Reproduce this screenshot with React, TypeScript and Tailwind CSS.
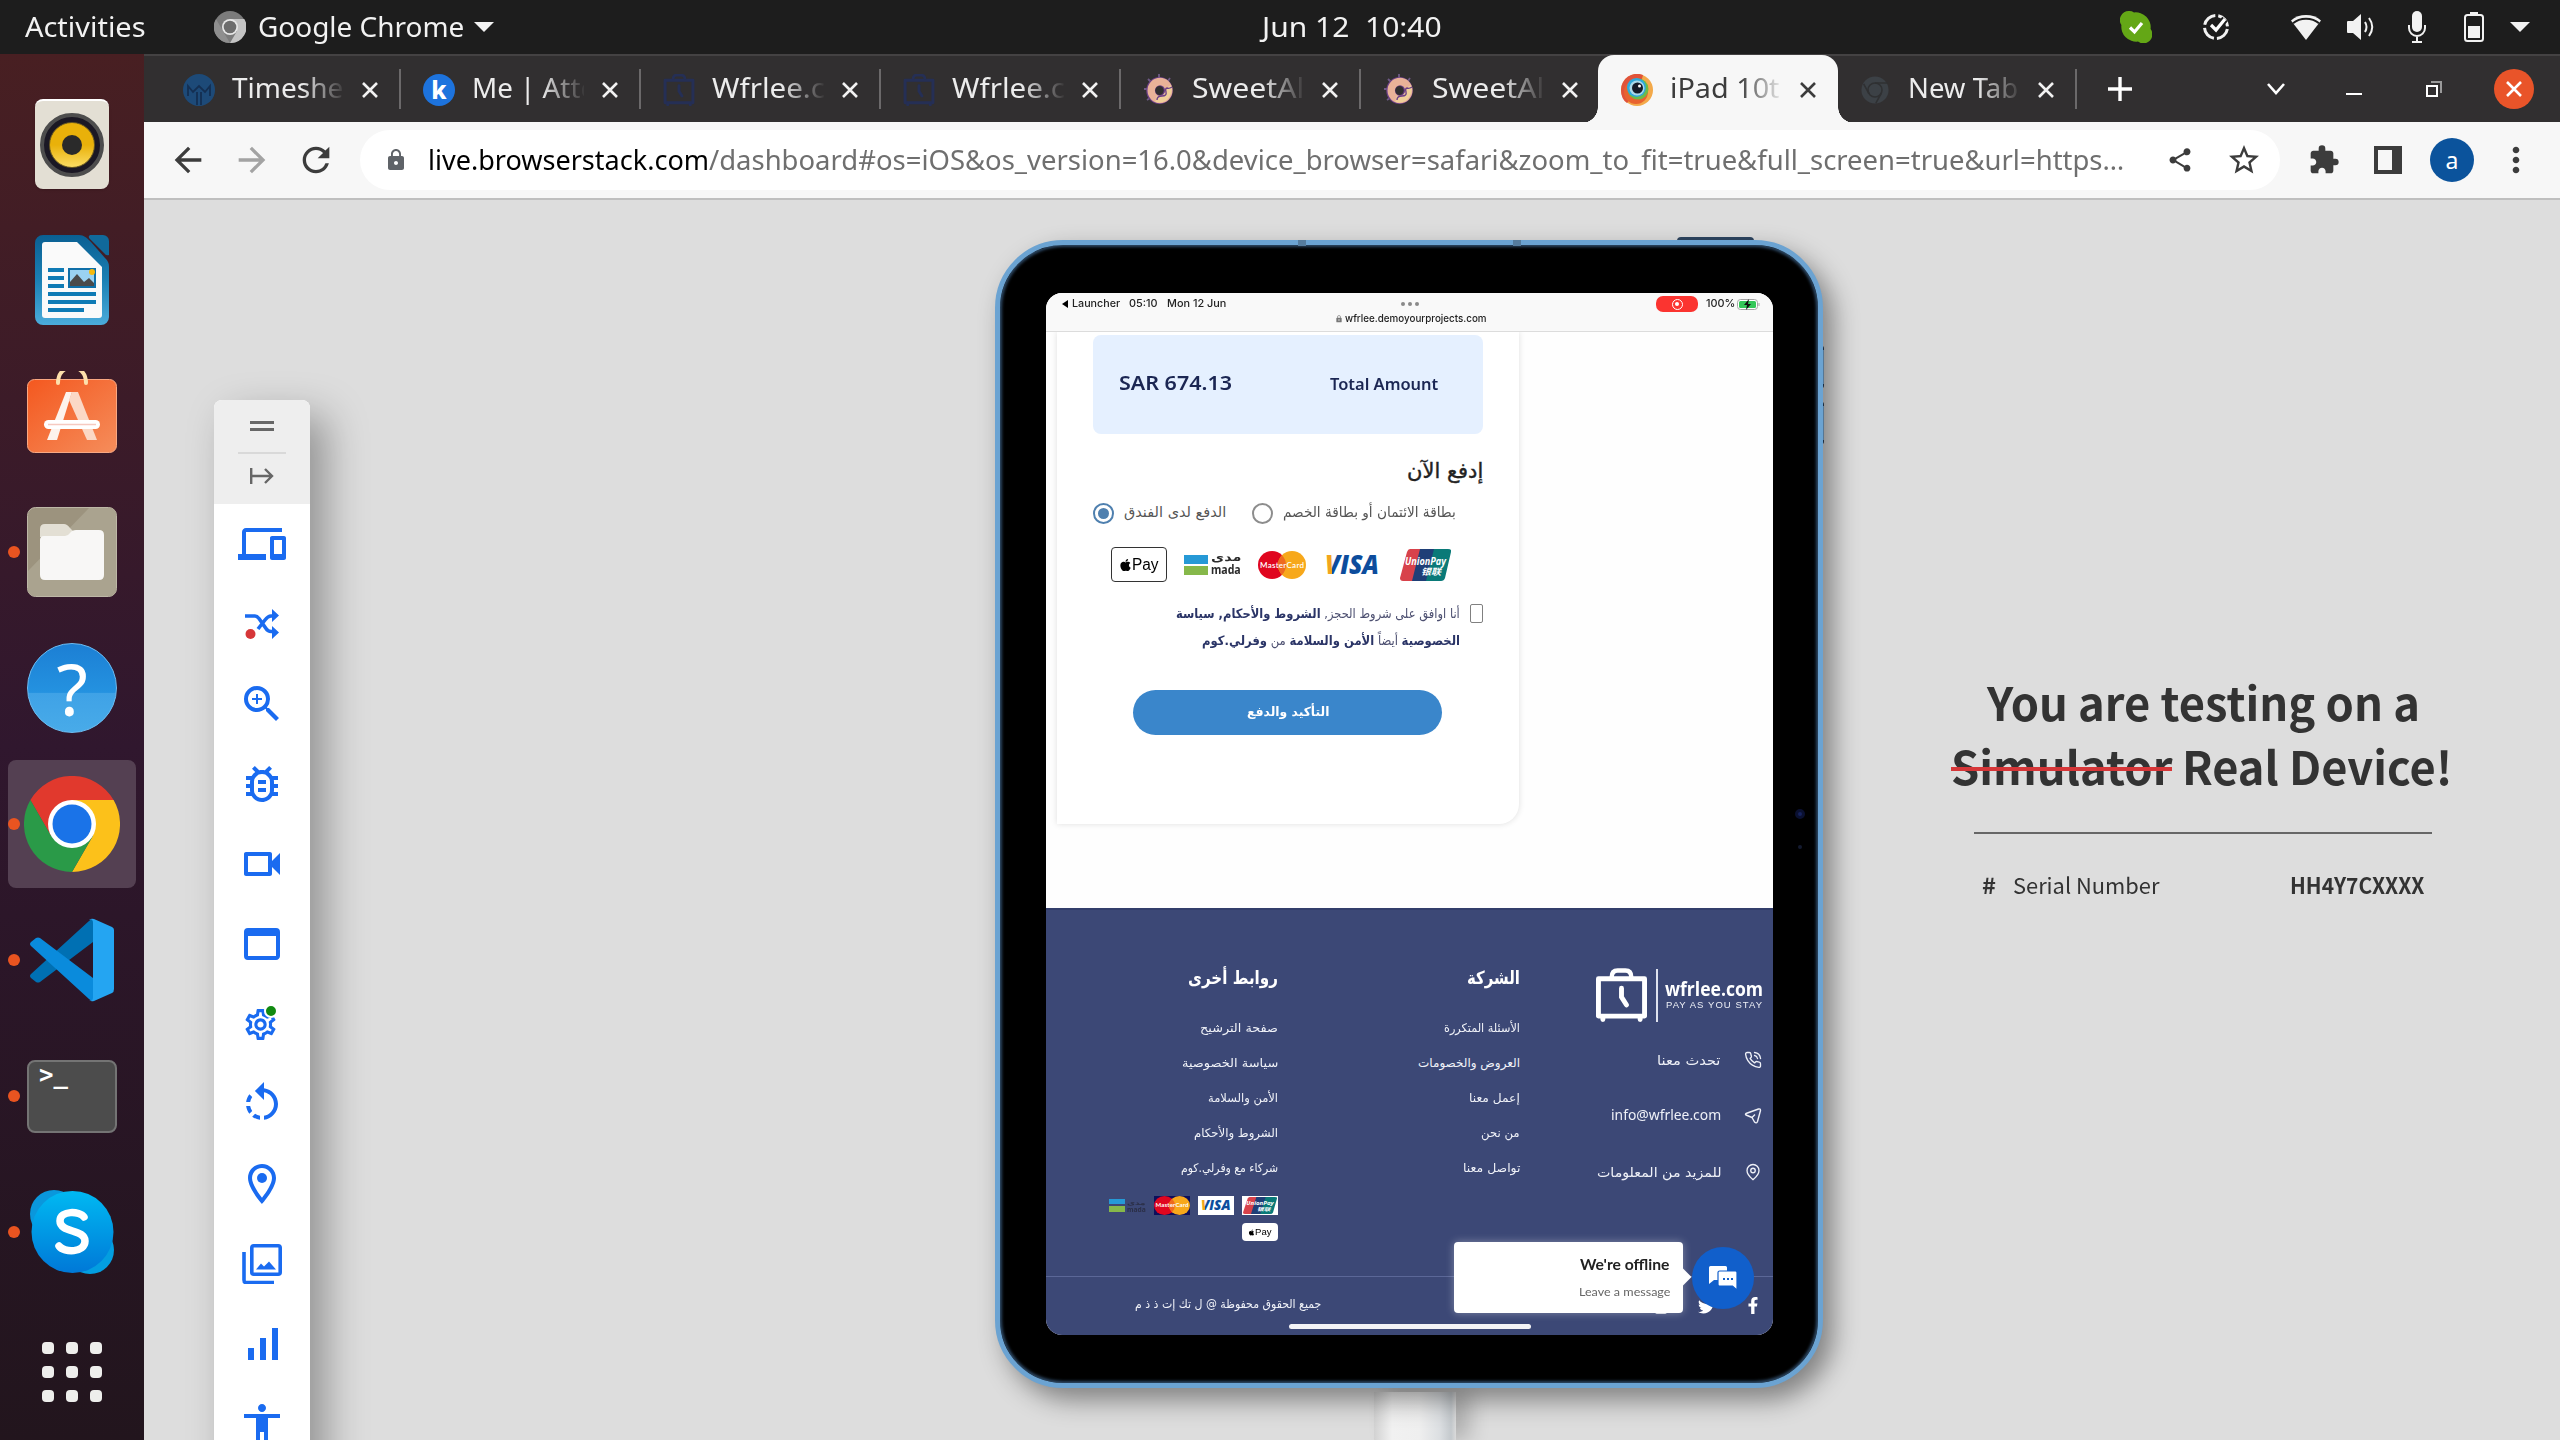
import { useLayoutEffect, useRef, useState } from "react";
import type { ReactNode } from "react";
import {
  MdDevices,
  MdZoomIn,
  MdOutlineBugReport,
  MdOutlineVideocam,
  MdWebAsset,
  MdOutlineSettings,
  MdRotateLeft,
  MdOutlineLocationOn,
  MdSignalCellularAlt,
  MdAccessibility,
  MdArrowBack,
  MdArrowForward,
  MdRefresh,
  MdLock,
  MdShare,
  MdStarOutline,
  MdExtension,
  MdMoreVert,
} from "react-icons/md";
import { FaApple, FaTwitter, FaFacebookF, FaInstagram } from "react-icons/fa";
import { LuPhoneCall, LuMapPin } from "react-icons/lu";

/* One line of text condensed or stretched to a given width. */
function T({ w, className = "", rtl = false, children }: { w: number; className?: string; rtl?: boolean; children: ReactNode }) {
  const ref = useRef<HTMLSpanElement>(null);
  const [k, setK] = useState(1);
  useLayoutEffect(() => {
    if (ref.current && ref.current.offsetWidth) setK(w / ref.current.offsetWidth);
  }, [w]);
  return (
    <span className={"inline-flex shrink-0 " + className} style={{ width: w }}>
      <span ref={ref} dir={rtl ? "rtl" : "ltr"} className="inline-block shrink-0 origin-left whitespace-pre" style={{ transform: `scaleX(${k})` }}>
        {children}
      </span>
    </span>
  );
}

const X = ({ c }: { c: string }) => (
  <svg viewBox="0 0 16 16" className={"h-4 w-4 " + c}>
    <path d="M1 1l14 14M15 1L1 15" stroke="currentColor" strokeWidth="2.6" fill="none" />
  </svg>
);

/* ---------- system bar ---------- */
function TopBar() {
  return (
    <header className="flex h-[54px] items-center bg-[#1d1d1d] pl-[25px] text-[27px] leading-[54px] text-[#f2f2f2]">
      <T w={120}>Activities</T>
      <svg viewBox="0 0 32 32" className="ml-[69px] h-8 w-8">
        <circle cx="16" cy="16" r="16" fill="#7b7b7b" />
        <path d="M16 8h14.3A16 16 0 0 1 16 32l7-12z" fill="#c4c4c4" />
        <path d="M2 8l7 12 7 12A16 16 0 0 1 2 8z" fill="#8f8f8f" />
        <circle cx="16" cy="16" r="8" fill="#e8e8e8" />
        <circle cx="16" cy="16" r="6.3" fill="#6d6d6d" />
      </svg>
      <T w={206} className="ml-[12px]">Google Chrome</T>
      <svg viewBox="0 0 20 10" className="ml-[10px] h-[10px] w-5"><path d="M0 0h20L10 10z" fill="#f2f2f2" /></svg>
      <T w={180} className="ml-[768px]">{"Jun 12  10:40"}</T>
      <svg viewBox="0 0 32 32" className="ml-[678px] h-8 w-8">
        <path d="M9 0a9 9 0 0 1 5 1.4A15 15 0 0 1 30.6 18 9 9 0 0 1 18 30.6 15 15 0 0 1 1.4 14 9 9 0 0 1 9 0z" fill="#64a716" />
        <path d="M10 16.5l4.5 4.5L22 12" stroke="#fff" strokeWidth="3.2" fill="none" />
      </svg>
      <svg viewBox="0 0 28 28" className="ml-[50px] h-7 w-7" fill="none">
        <circle cx="14" cy="14" r="11.5" stroke="#f2f2f2" strokeWidth="3" strokeDasharray="15 3.06" strokeDashoffset="-2" />
        <path d="M9 12l5 5 9-11" stroke="#1d1d1d" strokeWidth="7" />
        <path d="M9 12l5 5 9-11" stroke="#fff" strokeWidth="3.2" />
      </svg>
      <svg viewBox="0 0 30 25" className="ml-[61px] h-[25px] w-[30px]">
        <path d="M0 5.5C8-1.8 22-1.8 30 5.5L15 25z" fill="#f2f2f2" />
        <path d="M2 8.2C9 2.2 21 2.2 28 8.2" stroke="#1d1d1d" strokeWidth="2" fill="none" />
      </svg>
      <svg viewBox="0 0 30 26" className="ml-[26px] h-[26px] w-[30px]">
        <path d="M0 8q0-1 1-1h5l8-7v26l-8-7H1q-1 0-1-1z" fill="#f2f2f2" />
        <path d="M18 8q3 5 0 10M22 4q6.500 9 0 18" stroke="#f2f2f2" strokeWidth="2" fill="none" />
      </svg>
      <svg viewBox="0 0 18 32" className="ml-[31px] h-8 w-[18px]">
        <rect x="4" width="10" height="21" rx="5" fill="#f2f2f2" />
        <path d="M1 14v3a8 8 0 0 0 16 0v-3M9 25v6M4 31h10" stroke="#f2f2f2" strokeWidth="2" fill="none" />
      </svg>
      <svg viewBox="0 0 20 30" className="ml-[38px] h-[30px] w-5">
        <rect x="1" y="3" width="18" height="26" rx="2.5" stroke="#f2f2f2" strokeWidth="2" fill="none" />
        <path d="M6 0h8v3H6zM4 14h12v12H4z" fill="#f2f2f2" />
      </svg>
      <svg viewBox="0 0 20 10" className="ml-[26px] h-[10px] w-5"><path d="M0 0h20L10 10z" fill="#f2f2f2" /></svg>
    </header>
  );
}

/* ---------- dock ---------- */
function DockCell({ run, active, children }: { run?: boolean; active?: boolean; children: ReactNode }) {
  return (
    <div className="flex h-[136px] items-center justify-center">
      <div className={"relative flex h-32 w-32 items-center justify-center rounded-lg " + (active ? "bg-[#544052]" : "")}>
        {run && <span className="absolute left-0 h-3 w-3 rounded-full bg-[#e95420]" />}
        {children}
      </div>
    </div>
  );
}

function Dock() {
  return (
    <aside className="flex w-36 shrink-0 flex-col bg-[linear-gradient(#481f22_0%,#30172e_50%,#2c1629_62%,#22151d_100%)] pt-[22px]">
      <DockCell>
        <div className="flex h-[90px] w-[74px] items-center justify-center rounded-lg border-t-2 border-white bg-[#e3dfd4] shadow">
          <div className="flex h-16 w-16 items-center justify-center rounded-full border-4 border-[#4d4d4d] bg-[#1b1824]">
            <div className="flex h-[46px] w-[46px] items-center justify-center rounded-full border border-[#6b5a20] bg-[linear-gradient(#e9b10a_50%,#fbdc62)]">
              <div className="h-5 w-5 rounded-full bg-[#2a2a2a]" />
            </div>
          </div>
        </div>
      </DockCell>
      <DockCell>
        <svg viewBox="0 0 74 90" className="h-[90px] w-[74px]">
          <defs><linearGradient id="wr" x1="0" y1="0" x2="0" y2="1"><stop offset="0" stopColor="#0a5f92" /><stop offset=".5" stopColor="#1b80b4" /><stop offset="1" stopColor="#4bacdb" /></linearGradient></defs>
          <path d="M8 0h36c5 0 8 3 12 7l14 16c3 3 4 5 4 9v50a8 8 0 0 1-8 8H8a8 8 0 0 1-8-8V8a8 8 0 0 1 8-8z" fill="url(#wr)" />
          <path d="M55 0h13a6 6 0 0 1 6 6v14q-3 1-5-2L54 3q-1-2 1-3z" fill="#10699b" />
          <path d="M10 7h32l25 25v48a3 3 0 0 1-3 3H10a3 3 0 0 1-3-3V10a3 3 0 0 1 3-3z" fill="#fafafa" />
          <path d="M13 35h16M13 43h16M13 51h16M13 59h48M13 67h48M13 75h36" stroke="#0f7bb5" strokeWidth="4" />
          <path d="M33 33h28v20H33z" fill="#0f6fa8" /><path d="M35 35h24v16H35z" fill="#9ad2f2" />
          <path d="M35 51v-4l7-8 7 8 5-4 5 5v3z" fill="#4a4a4a" /><circle cx="57" cy="37" r="3" fill="#f5b90c" />
        </svg>
      </DockCell>
      <DockCell>
        <svg viewBox="0 0 90 90" className="h-[90px] w-[90px]">
          <defs><linearGradient id="sw" x1="0" y1="0" x2="1" y2="1"><stop offset="0" stopColor="#f4581f" /><stop offset="1" stopColor="#f58d5b" /></linearGradient></defs>
          <rect x=".5" y="8.500" width="89" height="73" rx="7" fill="url(#sw)" stroke="#f8a883" />
          <path d="M31 12c0-21 28-21 28 0" stroke="#fde0ac" strokeWidth="4" fill="none" strokeLinecap="round" />
          <path d="M39 21h6L30 69H20z" fill="#fdf3ec" /><path d="M45 21h6l19 48H60L42 29z" fill="#fbd8c5" />
          <rect x="17" y="49" width="56" height="9" rx="4.500" fill="#fff" /><path d="M21 53.500h48" stroke="#f6c9c0" strokeWidth="1.500" />
        </svg>
      </DockCell>
      <DockCell run>
        <svg viewBox="0 0 90 90" className="h-[90px] w-[90px]">
          <rect x=".5" y=".5" width="89" height="89" rx="8" fill="#9c937e" stroke="#bdb7a6" />
          <path d="M1 64L62 1h20q7 0 7 7v74q0 7-7 7H8q-7 0-7-7z" fill="#aaa38f" />
          <path d="M13 30V22q0-5 5-5h19q3 0 6 4l3 3v8z" fill="#e3dfd4" />
          <path d="M13 33q0-4 4-4h21q3 0 5-3t6-3h23q5 0 5 5v40q0 5-5 5H18q-5 0-5-5z" fill="#f8f7f6" />
        </svg>
      </DockCell>
      <DockCell>
        <div className="flex h-[90px] w-[90px] items-center justify-center rounded-full border border-[#6cbcf2] bg-[linear-gradient(#1c7fd4,#2492e0_55%,#3fa2e6_56%,#48abe9)] text-[72px] text-white">?</div>
      </DockCell>
      <DockCell run active>
        <svg viewBox="0 0 96 96" className="h-24 w-24">
          <path d="M6.400 24A48 48 0 0 1 89.600 24H48L27 60z" fill="#e1392d" />
          <path d="M89.600 24A48 48 0 0 1 48 96L68.800 60 48 24z" fill="#fcc11a" />
          <path d="M6.400 24A48 48 0 0 0 48 96l20.800-36H27.200z" fill="#2a9a48" />
          <circle cx="48" cy="48" r="24" fill="#fff" /><circle cx="48" cy="48" r="19.500" fill="#1a73e8" />
        </svg>
      </DockCell>
      <DockCell run>
        <svg viewBox="0 0 84 84" className="h-[84px] w-[84px]">
          <path d="M1 56q-2 2 0 4l5 4q2 1 4 0L63 24V1q-2 0-4 2z" fill="#0070b3" />
          <path d="M1 28q-2-2 0-4l5-4q2-1 4 0l53 40v23q-2 0-4-2z" fill="#0a8bdc" />
          <path d="M59 82q2 2 5 1l18-8q2-1 2-4V12q0-2-2-3L64 1q-3-1-5 1 4-2 4 3v74q0 5-4 3z" fill="#24a5f2" />
        </svg>
      </DockCell>
      <DockCell run>
        <div className="h-[73px] w-[90px] rounded-lg border-2 border-[#747474] bg-[#4c4c4c] pl-[10px] font-['DejaVu_Sans_Mono'] text-[24px] leading-[26px] font-bold text-white">&gt;_</div>
      </DockCell>
      <DockCell run>
        <svg viewBox="0 0 84 84" className="h-[84px] w-[84px]">
          <defs><linearGradient id="sk" x1="0" y1="0" x2="0" y2="1"><stop offset="0" stopColor="#00b9f2" /><stop offset="1" stopColor="#0078d7" /></linearGradient></defs>
          <circle cx="24" cy="24" r="24" fill="#0a97dc" /><circle cx="60" cy="60" r="24" fill="#039ee0" />
          <circle cx="42.500" cy="42" r="41" fill="url(#sk)" />
          <path d="M54 27C50 21 30 20 30 31c0 12 25 8 25 20 0 12-21 12-26 5" stroke="#fff" strokeWidth="7.500" strokeLinecap="round" fill="none" />
        </svg>
      </DockCell>
      <div className="mx-auto mt-[42px] grid w-[60px] grid-cols-3 gap-3">
        {Array.from({ length: 9 }, (_, i) => <span key={i} className="h-3 w-3 rounded-[4px] bg-[#eeeeec]" />)}
      </div>
    </aside>
  );
}

/* ---------- browser chrome ---------- */
const Suitcase = ({ c, s = "h-8 w-8" }: { c: string; s?: string }) => (
  <svg viewBox="0 0 52 54" className={s} fill="none" stroke={c}>
    <path d="M2.500 10.500h47v38h-47z" strokeWidth="5" strokeLinejoin="round" />
    <path d="M16 9q0-7 6-7h8q6 0 6 7" strokeWidth="4.500" />
    <path d="M7 50v2M45 50v2" strokeWidth="5" strokeLinecap="round" />
    <path d="M26 20v9l5 8" strokeWidth="5" strokeLinecap="round" />
  </svg>
);
const Donut = () => (
  <svg viewBox="0 0 32 32" className="h-8 w-8">
    <path d="M16 0v4M5 5l3 3M27 4l-2 3M1 15h3M4 26l3-2" stroke="#6f5a86" strokeWidth="1.800" />
    <ellipse cx="16.500" cy="16.500" rx="8.800" ry="9" fill="none" stroke="#6b3f87" strokeWidth="9" />
    <ellipse cx="17" cy="16.500" rx="8.800" ry="9" fill="none" stroke="#e9b298" strokeWidth="7.400" />
    <path d="M13 25q8 2 11-4 3-5 1-8" fill="none" stroke="#efcf9a" strokeWidth="6" />
    <path d="M29 13q-3 2-5 1-2 0-1 4t-4 4-5 4" fill="none" stroke="#6b3f87" strokeWidth="1.400" />
  </svg>
);
const tabs: { icon: ReactNode; text: string; w: number }[] = [
  {
    icon: (
      <svg viewBox="0 0 32 32" className="h-8 w-8"><circle cx="16" cy="16" r="16" fill="#1d4a78" /><path d="M5 22V12l5 6 6-6 6 6 5-6v10M14 31V18M18 31V18" stroke="#142f52" strokeWidth="1.800" fill="none" /></svg>
    ),
    text: "Timeshe", w: 111,
  },
  { icon: <span className="flex h-8 w-8 items-center justify-center rounded-full bg-[#1d73dd] text-[24px] leading-none font-extrabold text-white">k</span>, text: "Me | Atte", w: 124 },
  { icon: <Suitcase c="#252f55" />, text: "Wfrlee.c", w: 113 },
  { icon: <Suitcase c="#252f55" />, text: "Wfrlee.c", w: 113 },
  { icon: <Donut />, text: "SweetAl", w: 112 },
  { icon: <Donut />, text: "SweetAl", w: 112 },
  {
    icon: (
      <svg viewBox="0 0 32 32" className="h-8 w-8">
        <circle cx="16" cy="16" r="16" fill="#f3a94a" /><path d="M22 1A16 16 0 0 0 0 16q0 9 6 13l12-13z" fill="#e0533a" />
        <circle cx="15" cy="18" r="12" fill="#e8632f" /><circle cx="17" cy="15" r="10.500" fill="#6cbb4a" /><circle cx="15.500" cy="13.500" r="9.500" fill="#2fa9dc" />
        <circle cx="16" cy="14" r="7.500" fill="#a9d8ea" /><circle cx="16.500" cy="14" r="5.500" fill="#151c2a" /><circle cx="18.500" cy="12" r="1.500" fill="#fff" />
      </svg>
    ),
    text: "iPad 10t", w: 110,
  },
  {
    icon: (
      <svg viewBox="0 0 32 32" className="h-7 w-8"><circle cx="16" cy="16" r="15.500" fill="#3c4146" /><circle cx="16" cy="16" r="8" fill="none" stroke="#2f3032" strokeWidth="1.800" /><path d="M16 8h14M9 20L3 9M23 20l-6 11" stroke="#2f3032" strokeWidth="1.800" /></svg>
    ),
    text: "New Tab", w: 110,
  },
];

function TabStrip() {
  return (
    <div className="flex h-[68px] items-center border-t-2 border-[#444243] bg-[#312f30] pl-[17px] text-[28px] leading-[36px] text-[#ececec]">
      {tabs.map((t, i) => {
        const on = i === 6;
        return (
          <div key={i} className={"relative flex h-[68px] w-60 items-center " + (on ? "z-10 pl-5 text-[#3c3c3c]" : i === 7 ? "pl-[18px]" : "pl-[22px]")}>
            {on && <>
              <span className="absolute top-0 -left-[3px] h-[68px] w-60 rounded-t-[16px] bg-[#f7f7f7]" />
              <span className="absolute bottom-0 -left-[19px] h-4 w-4 bg-[radial-gradient(circle_at_0_0,transparent_15.5px,#f7f7f7_16px)]" />
              <span className="absolute right-[-13px] bottom-0 h-4 w-4 bg-[radial-gradient(circle_at_100%_0,transparent_15.5px,#f7f7f7_16px)]" />
            </>}
            <span className="relative mt-px flex w-8">{t.icon}</span>
            <span className="relative -mt-1 ml-[17px] flex w-28 overflow-hidden [mask-image:linear-gradient(90deg,#000_62%,transparent_102%)]">
              <T w={t.w}>{t.text}</T>
            </span>
            <span className="relative mt-px ml-[18px] flex"><X c={on ? "text-[#3c3c3c]" : "text-[#f2f2f2]"} /></span>
            {i !== 5 && !on && <span className={"absolute h-10 w-0.5 bg-[#6b696a] " + (i === 7 ? "right-[4px]" : "right-0")} />}
          </div>
        );
      })}
      <svg viewBox="0 0 24 24" className="ml-[27px] h-6 w-6"><path d="M12 0v24M0 12h24" stroke="#fff" strokeWidth="3.400" /></svg>
      <svg viewBox="0 0 18 12" className="ml-[135px] h-3 w-[18px]"><path d="M1 1l8 9 8-9" stroke="#fff" strokeWidth="2.600" fill="none" /></svg>
      <span className="mt-[10px] ml-[61px] h-0.5 w-4 bg-white" />
      <svg viewBox="0 0 16 16" className="ml-16 h-4 w-4" fill="none"><path d="M5 1h10v11" stroke="#9a9a9a" strokeWidth="2" /><path d="M1 5h10v10H1z" stroke="#fff" strokeWidth="2" /></svg>
      <span className="ml-[52px] flex h-10 w-10 items-center justify-center rounded-full bg-[#e95429]"><X c="text-white" /></span>
    </div>
  );
}

function Toolbar() {
  return (
    <div className="flex h-[78px] items-center border-b-2 border-[#bfbfbf] bg-[#f7f7f7] pl-[24px] text-[#3c3c3c]">
      <MdArrowBack className="h-10 w-10" />
      <MdArrowForward className="ml-6 h-10 w-10 text-[#a3a3a3]" />
      <MdRefresh className="ml-6 h-10 w-10" />
      <div className="ml-[24px] flex h-[60px] w-[1920px] items-center rounded-full bg-white pl-6 text-[28px] leading-[60px] text-[#6f6f6f]">
        <MdLock className="h-6 w-6 text-[#5f6368]" />
        <T w={281} className="-mt-0.5 ml-[20px] text-black">live.browserstack.com</T>
        <T w={1415} className="-mt-0.5">/dashboard#os=iOS&amp;os_version=16.0&amp;device_browser=safari&amp;zoom_to_fit=true&amp;full_screen=true&amp;url=https…</T>
        <MdShare className="ml-[42px] h-7 w-7 text-[#3c3c3c]" />
        <MdStarOutline className="ml-[32px] h-9 w-9 text-[#3c3c3c]" />
      </div>
      <MdExtension className="ml-[28px] h-8 w-8" />
      <svg viewBox="0 0 28 28" className="ml-[34px] h-7 w-7"><path d="M0 0h28v28H0z" fill="#3c3c3c" /><path d="M4 4h14v20H4z" fill="#f7f7f7" /></svg>
      <span className="ml-[28px] flex h-11 w-11 items-center justify-center rounded-full bg-[#0b539c] text-[23px] leading-none text-white">a</span>
      <MdMoreVert className="ml-[22px] h-10 w-10" />
    </div>
  );
}

/* ---------- device tool panel ---------- */
function ToolPanel() {
  const ic = "h-12 w-12";
  const icons: ReactNode[] = [
    <MdDevices className={ic} />,
    <svg viewBox="0 0 34 30" className="h-[30px] w-[34px]" fill="none">
      <path d="M0 7h10q2 0 4 2.500l7 10q2 3 5 3h3M13 20l7-9q3-4 6-4h3" stroke="#1a6bf0" strokeWidth="3.600" />
      <path d="M27 0l7 6.500-7 6.500zM27 17l7 6.500-7 6.500z" fill="#1a6bf0" /><circle cx="5.500" cy="25" r="5" fill="#d63638" />
    </svg>,
    <MdZoomIn className={ic} />,
    <MdOutlineBugReport className={ic} />,
    <MdOutlineVideocam className={ic} />,
    <MdWebAsset className={ic} />,
    <span className="relative flex"><MdOutlineSettings className="mr-[3px] h-[37px] w-[37px]" /><span className="absolute -top-0.5 right-1 box-content h-[10px] w-[10px] rounded-full border-2 border-white bg-[#118a11]" /></span>,
    <MdRotateLeft className={ic} />,
    <MdOutlineLocationOn className={ic} />,
    <svg viewBox="0 0 40 40" className="h-10 w-10" fill="none" stroke="#1a6bf0"><rect x="9.800" y="1.800" width="28.400" height="28.400" rx="2" strokeWidth="3.600" /><path d="M2 8v28q0 2.500 2 2.500h28" strokeWidth="3.600" /><path d="M14 25.500l5-6 3 3 5-5 7 8z" fill="#1a6bf0" stroke="none" /></svg>,
    <MdSignalCellularAlt className={ic} />,
    <MdAccessibility className={ic} />,
  ];
  return (
    <div className="mt-[200px] ml-[70px] h-[1100px] w-24 shrink-0 rounded-t-lg bg-white text-[#1a6bf0] shadow-[16px_16px_40px_0_rgba(0,0,0,0.34)]">
      <div className="flex h-[104px] flex-col items-center rounded-t-lg bg-[#eeeeee] pt-[21px]">
        <span className="h-[10px] w-6 border-y-[3px] border-[#666]" />
        <span className="mt-[21px] h-0.5 w-12 bg-[#d9d9d9]" />
        <svg viewBox="0 0 24 16" className="mt-[14px] h-4 w-6" fill="none" stroke="#666" strokeWidth="2.400"><path d="M1.200 0v16M1 8h21M15 1l7 7-7 7" /></svg>
      </div>
      {icons.map((n, i) => <div key={i} className="flex h-20 items-center justify-center">{n}</div>)}
    </div>
  );
}

/* ---------- payment marks ---------- */
const ApplePay = ({ small = false }: { small?: boolean }) => (
  <span className={"flex items-center justify-center bg-white text-black " + (small ? "h-[18px] w-9 rounded-sm" : "h-[35px] w-14 rounded-[4px] border border-[#333]")}>
    <FaApple className={small ? "h-[7px] w-[7px]" : "h-[14px] w-[13px]"} />
    <T w={small ? 17 : 27} className={"font-['Liberation_Sans'] leading-none " + (small ? "text-[9px]" : "text-[16px]")}>Pay</T>
  </span>
);
const Mada = ({ small = false }: { small?: boolean }) => (
  <span className={"flex items-center justify-between " + (small ? "h-[13px] w-[37px] text-[#2b2f47]" : "h-[22px] w-[57px] text-[#2b2b2b]")}>
    <span className={"flex flex-col justify-between " + (small ? "h-[13px] w-4" : "h-5 w-6")}>
      <span className={"bg-[#2699d6] " + (small ? "h-[5px]" : "h-[9px]")} />
      <span className={"bg-[#86b84a] " + (small ? "h-1.5" : "h-[9px]")} />
    </span>
    <span className="flex flex-col items-end font-bold">
      <T rtl w={small ? 19 : 30} className={"font-['DejaVu_Sans'] " + (small ? "text-[6px] leading-[7px]" : "text-[11px] leading-[10px]")}>مدى</T>
      <T w={small ? 19 : 30} className={small ? "text-[7px] leading-[7px]" : "text-[12px] leading-[13px]"}>mada</T>
    </span>
  </span>
);
const MasterCard = ({ small = false }: { small?: boolean }) => (
  <svg viewBox="0 0 48 28" preserveAspectRatio="none" className={small ? "h-[19px] w-9 bg-[#0d0f5c]" : "h-7 w-12"}>
    <circle cx="14" cy="14" r="14" fill="#e0061f" /><circle cx="34" cy="14" r="14" fill="#f7a81b" />
    <path d="M24 4.200a14 14 0 0 1 0 19.600 14 14 0 0 1 0-19.600z" fill="#ee6a1f" />
    <text x="24" y="16.500" textAnchor="middle" fontSize="8" fontWeight={small ? 700 : 600} fill="#fff" fontFamily="Lato, sans-serif" textLength="44">MasterCard</text>
  </svg>
);
const Visa = ({ small = false }: { small?: boolean }) => (
  <svg viewBox="0 0 55 19" className={small ? "h-[19px] w-9 bg-white px-[3px]" : "h-[19px] w-[55px]"}>
    <defs>
      <linearGradient id="visa" gradientUnits="userSpaceOnUse" x1="0" y1="0" x2="55" y2="0">
        <stop offset=".12" stopColor="#f2a51e" /><stop offset=".13" stopColor="#0d4c9c" />
      </linearGradient>
    </defs>
    <text x="0" y="18.500" fontSize="26" fontWeight="800" fontStyle="italic" fontFamily="Open Sans, sans-serif" fill="url(#visa)" textLength="54" lengthAdjust="spacingAndGlyphs">VISA</text>
  </svg>
);
const UnionPay = ({ small = false }: { small?: boolean }) => (
  <svg viewBox="0 0 51 32" preserveAspectRatio="none" className={small ? "h-[19px] w-9 bg-white p-px" : "h-8 w-[51px]"}>
    <path d="M10 0h12l-7 32H3q-3 0-3-3L7 3q1-3 3-3z" fill="#d8424b" />
    <path d="M20 0h16l-7 32H12z" fill="#1f3f77" /><path d="M34 0h14q4 0 3 3l-6 26q-1 3-4 3H26z" fill="#0a7a78" />
    <text x="5" y="16" fontSize="10.500" fontWeight="700" fontStyle="italic" fill="#fff" fontFamily="Open Sans, sans-serif" textLength="41" lengthAdjust="spacingAndGlyphs">UnionPay</text>
    <text x="21" y="26" fontSize="9" fontWeight="700" fontStyle="italic" fill="#fff" fontFamily="Noto Sans CJK SC, sans-serif" textLength="20" lengthAdjust="spacingAndGlyphs">银联</text>
  </svg>
);

/* ---------- page shown on the tablet ---------- */
const AR = "font-['DejaVu_Sans'] ";

function StatusBar() {
  return (
    <div className="h-[39px] border-b border-[#dcdcdc] bg-[#f9f9f9] pt-[3px] font-['Inter'] text-[10.5px] leading-4 font-medium text-[#222]">
      <div className="flex h-4 items-center pl-4">
        <svg viewBox="0 0 6 8" className="h-2 w-1.5"><path d="M6 0v8L0 4z" /></svg>
        <T w={48} className="ml-1">Launcher</T>
        <T w={29} className="ml-[9px]">05:10</T>
        <T w={59} className="ml-[9px]">Mon 12 Jun</T>
        <span className="ml-[175px] flex gap-[3px]">{[0, 1, 2].map((i) => <i key={i} className="h-1 w-1 rounded-full bg-[#8a8a8a]" />)}</span>
        <span className="ml-[237px] flex h-4 w-[42px] items-center justify-center rounded-[7px] bg-[#fb3430]">
          <span className="flex h-[11px] w-[11px] items-center justify-center rounded-full border border-white"><i className="h-1 w-1 rounded-full bg-white" /></span>
        </span>
        <T w={29} className="ml-2">100%</T>
        <svg viewBox="0 0 24 11" className="ml-[2px] h-[11px] w-6"><rect x=".5" y=".5" width="20" height="10" rx="3" fill="#fff" stroke="#a5a5a5" /><rect x="2" y="2" width="17" height="7" rx="1.500" fill="#35c759" /><path d="M12 0L7 6h3l-1 5 5-6h-3z" fill="#111" /><path d="M22 4v3" stroke="#a5a5a5" /></svg>
      </div>
      <div className="-mt-px flex h-4 items-center pl-[289px]">
        <MdLock className="h-2 w-2 text-[#777]" />
        <T w={142} className="ml-0.5">wfrlee.demoyourprojects.com</T>
      </div>
    </div>
  );
}

function PaymentCard() {
  return (
    <div className="h-[576px] bg-[#fefefe] pl-[11px]">
      <div className="h-[492px] w-[462px] rounded-br-[20px] bg-white pt-[3px] pl-9 shadow-[0_0_6px_rgba(0,0,0,0.13)] [clip-path:inset(0_-8px_-8px_-8px)]">
        <div className="flex h-[99px] w-[390px] items-center rounded-[8px] bg-[#e5f0ff] pb-0.5 pl-[26px] font-semibold text-[#1b2653]">
          <T w={113} className="text-[19px]">SAR 674.13</T>
          <T w={108} className="ml-[98px] text-[16px]">Total Amount</T>
        </div>
        <div className={AR + "flex h-[76px] w-[390px] items-center justify-end text-[21px] text-[#222] [-webkit-text-stroke:0.4px]"}>
          <T rtl w={76}>إدفع الآن</T>
        </div>
        <div className={AR + "-mt-[13px] flex h-8 items-center text-[14.500px] text-[#555]"}>
          <span className="flex h-[21px] w-[21px] items-center justify-center rounded-full border-2 border-[#4f80af]"><i className="h-[11px] w-[11px] rounded-full bg-[#4f80af]" /></span>
          <T rtl w={102} className="ml-[10px]">الدفع لدى الفندق</T>
          <span className="ml-[26px] h-[21px] w-[21px] rounded-full border-2 border-[#8d8d8d]" />
          <T rtl w={173} className="ml-[10px]">بطاقة الائتمان أو بطاقة الخصم</T>
        </div>
        <div className="mt-[18px] flex h-[35px] items-center pl-[18px]">
          <ApplePay /><span className="w-[17px]" /><Mada /><span className="w-[17px]" /><MasterCard /><span className="w-[19px]" /><Visa /><span className="w-5" /><UnionPay />
        </div>
        <div className={AR + "mt-[18px] flex h-[54px] w-[390px] justify-end text-[13px] leading-[27px] text-[#4c4f70]"}>
          <div className="flex flex-col items-end">
            <T rtl w={284}>أنا اوافق على شروط الحجز, <b className="text-[#2b3567]">الشروط والأحكام, سياسة</b></T>
            <T rtl w={258}><b className="text-[#2b3567]">الخصوصية</b> أيضاً <b className="text-[#2b3567]">الأمن والسلامة</b> من <b className="text-[#2b3567]">وفرلي.كوم</b></T>
          </div>
          <span className="mt-1 ml-[10px] h-[19px] w-[13px] rounded-[2px] border border-[#808080]" />
        </div>
        <button className={AR + "mt-9 ml-10 flex h-[45px] w-[309px] items-center justify-center rounded-full bg-[#3a86cb] text-[12.500px] font-bold text-white"}>
          <T rtl w={82}>التأكيد والدفع</T>
        </button>
      </div>
    </div>
  );
}

function LinkColumn({ head, hw, links, className }: { head: string; hw: number; links: [string, number][]; className: string }) {
  return (
    <div className={AR + "flex shrink-0 flex-col items-end text-[12px] text-[#f0f2f8] " + className}>
      <T rtl w={hw} className="h-[30px] text-[18px] leading-[30px] font-bold text-white">{head}</T>
      <div className="mt-[18px] flex flex-col items-end">
        {links.map(([s, w]) => <T key={s} rtl w={w} className="h-[35px] leading-[35px]">{s}</T>)}
      </div>
    </div>
  );
}

function Footer() {
  return (
    <div className="relative h-[427px] border-t-2 border-[#333e6b] bg-[#3c4876]">
      <div className="flex h-[366px] pt-[53px]">
        <div className="w-[232px]">
          <LinkColumn className="" head="روابط أخرى" hw={90} links={[["صفحة الترشيح", 78], ["سياسة الخصوصية", 96], ["الأمن والسلامة", 70], ["الشروط والأحكام", 84], ["شركاء مع وفرلي.كوم", 97]]} />
          <div className="mt-[10px] ml-[63px] flex h-[19px] items-center justify-between"><Mada small /><MasterCard small /><Visa small /><UnionPay small /></div>
          <div className="mt-2 flex justify-end"><ApplePay small /></div>
        </div>
        <LinkColumn className="w-[242px]" head="الشركة" hw={53} links={[["الأسئلة المتكررة", 76], ["العروض والخصومات", 102], ["إعمل معنا", 51], ["من نحن", 39], ["تواصل معنا", 57]]} />
        <div className="w-[243px] text-[#eef0f7]">
          <div className="mt-[5px] flex h-[54px] items-center justify-end">
            <Suitcase c="#fff" s="h-[54px] w-[51px]" />
            <span className="ml-[9px] h-[53px] w-0.5 bg-[#dfe2ee]" />
            <div className="ml-[7px] flex flex-col items-end">
              <T w={98} className="font-['Open_Sans'] text-[19px] leading-[19px] font-bold text-white">wfrlee.com</T>
              <T w={97} className="mt-px font-['Liberation_Sans'] text-[9px] leading-[11px] tracking-[1px]">PAY AS YOU STAY</T>
            </div>
          </div>
          <div className="mt-[10px] flex flex-col pr-px">
            <div className={AR + "flex h-14 items-center justify-end text-[13.500px]"}><T rtl w={64}>تحدث معنا</T><LuPhoneCall className="ml-[23px] h-[18px] w-[18px]" strokeWidth={1.8} /></div>
            <div className="flex h-14 items-center justify-end pb-0.5 text-[14.500px]"><T w={110}>info@wfrlee.com</T>
              <svg viewBox="0 0 18 18" className="mt-0.5 ml-[23px] h-[18px] w-[18px]" fill="none" stroke="currentColor" strokeWidth="1.400" strokeLinejoin="round"><path d="M2 6.500L14.500 2q2-.5 2 1.500l-3 11q-1 2.500-3 .5L8 10.500 2 8q-1-.8 0-1.500zM8 10.500L11 7.500" /></svg>
            </div>
            <div className={AR + "flex h-14 items-center justify-end text-[13.500px]"}><T rtl w={124}>للمزيد من المعلومات</T><LuMapPin className="ml-[23px] h-[18px] w-[18px]" strokeWidth={1.8} /></div>
          </div>
        </div>
      </div>
      <div className={AR + "flex h-[59px] items-center border-t border-[#5b6797] pb-1 pl-[89px] text-[12px] text-[#f0f2f8]"}>
        <T rtl w={186}>جميع الحقوق محفوظة @ ل تك إت ذ ذ م</T>
        <FaInstagram className="mt-1 ml-[331px] h-[18px] w-[18px] text-white" />
        <FaTwitter className="mt-1 ml-[28px] h-[17px] w-[17px] text-white" />
        <FaFacebookF className="mt-0.5 ml-[32px] h-[17px] w-3 text-white" />
      </div>
      <div className="absolute right-[90px] bottom-[22px] h-[71px] w-[229px] rounded-[4px] bg-white pt-[10px] shadow-[0_0_8px_rgba(255,255,255,0.35)]">
        <span className="absolute top-[29px] -right-[6px] h-3 w-3 rotate-45 bg-white" />
        <div className="flex flex-col items-end pr-[13px] font-['Lato']">
          <T w={90} className="text-[15px] leading-6 font-bold text-[#222]">We're offline</T>
          <T w={91} className="mt-1 text-[12px] leading-6 text-[#666]">Leave a message</T>
        </div>
      </div>
      <div className="absolute right-[19px] bottom-[26px] flex h-[62px] w-[62px] items-center justify-center rounded-full bg-[#115fcb]">
        <svg viewBox="0 0 28 24" className="h-6 w-7"><path d="M1.500 0h15q1.500 0 1.500 1.500V14H5l-5 4V1.500Q0 0 1.500 0z" fill="#fff" /><path d="M10.500 5h16Q28 5 28 6.500V24l-4.500-4h-13Q9 20 9 18.500v-12Q9 5 10.500 5z" fill="#fff" stroke="#115fcb" strokeWidth="1.200" /><path d="M14 13h2M18 13h2M22 13h2" stroke="#115fcb" strokeWidth="1.800" /></svg>
      </div>
      <span className="absolute bottom-[6px] left-[243px] h-[5px] w-[242px] rounded-full bg-[#f3f3f6]" />
    </div>
  );
}

function Tablet() {
  return (
    <div className="mt-10 ml-[685px] flex shrink-0 flex-col items-center">
      <div className="relative">
        <span className="absolute -top-[3px] right-[69px] h-2 w-[77px] rounded-sm bg-[#2d4560]" />
        <span className="absolute top-[106px] -right-px h-[42px] w-1 rounded-sm border-y-4 border-[#2d4560] bg-[#7fb0da]" />
        <span className="absolute top-[162px] -right-px h-[42px] w-1 rounded-sm border-y-4 border-[#2d4560] bg-[#7fb0da]" />
        <div className="relative h-[1148px] w-[828px] rounded-[68px] border-[5px] border-[#6ba3d2] bg-black px-[46px] pt-12 shadow-[10px_12px_26px_rgba(0,0,0,0.42),inset_0_0_3px_2px_#2d4864]">
          <div className="h-[1042px] w-[727px] overflow-hidden rounded-[16px] bg-white">
            <StatusBar />
            <PaymentCard />
            <Footer />
          </div>
          <span className="absolute top-[564px] right-[13px] h-2.5 w-2.5 rounded-full border-[3px] border-[#0a1030] bg-[#16225c]" />
          <span className="absolute top-[600px] right-4 h-1 w-1 rounded-full bg-[#141a30]" />
          <span className="absolute -top-[5px] left-[298px] h-1.5 w-2 bg-[#557c9e]" />
          <span className="absolute -top-[5px] left-[513px] h-1.5 w-2 bg-[#557c9e]" />
        </div>
      </div>
      <div className="mt-1 ml-[12px] h-12 w-[82px] bg-[linear-gradient(90deg,#d2d2d2,#f1f1f1_22%,#efefef_55%,#dcdfe2_80%,#c4c9cd_94%,#dadada)] shadow-[14px_0_20px_rgba(0,0,0,0.2)]" />
    </div>
  );
}

function DeviceInfo() {
  return (
    <section className="mt-[469px] ml-[125px] flex w-[510px] shrink-0 flex-col items-center font-['Noto_Sans_CJK_SC'] text-[#333]">
      <T w={433} className="h-16 text-[46px] leading-[64px] font-bold">You are testing on a</T>
      <div className="-ml-0.5 flex h-16 text-[46px] leading-[64px] font-bold">
        <span className="relative flex"><T w={221}>Simulator</T><span className="absolute top-[34px] h-1 w-full bg-[#d63638]" /></span>
        <T w={271} className="ml-[10px]">Real Device!</T>
      </div>
      <div className="mt-[35px] h-0.5 w-[458px] bg-[#666]" />
      <div className="mt-[34px] flex w-[442px] items-center text-[22px] leading-8">
        <T w={14} className="font-bold">#</T>
        <T w={146} className="ml-[17px]">Serial Number</T>
        <T w={134} className="ml-auto font-bold">HH4Y7CXXXX</T>
      </div>
    </section>
  );
}

export default function App() {
  return (
    <div className="flex h-[1440px] w-[2560px] flex-col overflow-hidden bg-[#dddddd] font-['Noto_Sans',sans-serif]">
      <TopBar />
      <div className="flex h-[1386px]">
        <Dock />
        <div className="flex w-[2416px] flex-col">
          <TabStrip />
          <Toolbar />
          <main className="flex h-[1240px] items-start overflow-hidden bg-[#dddddd]">
            <ToolPanel />
            <Tablet />
            <DeviceInfo />
          </main>
        </div>
      </div>
    </div>
  );
}
